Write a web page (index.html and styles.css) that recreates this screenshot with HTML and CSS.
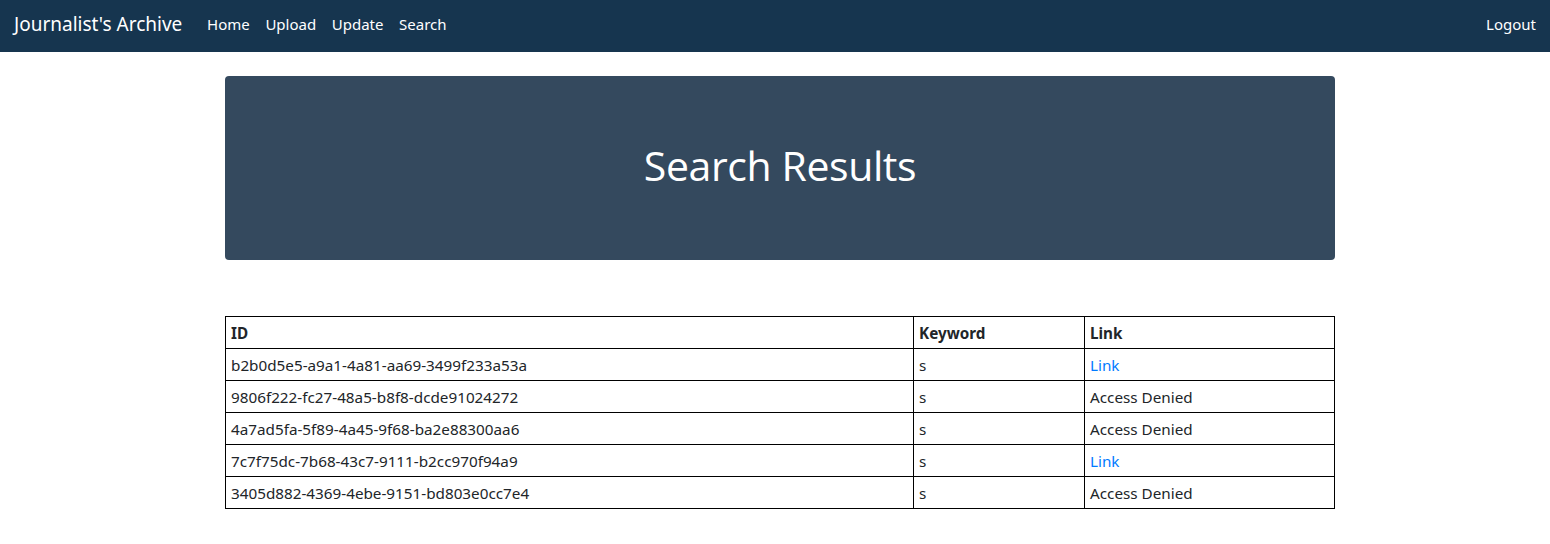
FILE: index.html
```html
<!DOCTYPE html>
<html lang="en">
<head>
<meta charset="utf-8">
<title>Search Results</title>
<link rel="stylesheet" href="styles.css">
</head>
<body>
<nav class="navbar">
  <a class="brand" href="#">Journalist's Archive</a>
  <ul class="nav-links">
    <li><a href="#">Home</a></li>
    <li><a href="#">Upload</a></li>
    <li><a href="#">Update</a></li>
    <li><a href="#">Search</a></li>
  </ul>
  <a class="logout" href="#">Logout</a>
</nav>
<main class="container">
  <section class="jumbotron">
    <h1>Search Results</h1>
  </section>
  <table class="results">
    <thead>
      <tr><th class="col-id">ID</th><th class="col-kw">Keyword</th><th class="col-link">Link</th></tr>
    </thead>
    <tbody>
      <tr><td>b2b0d5e5-a9a1-4a81-aa69-3499f233a53a</td><td>s</td><td><a href="#">Link</a></td></tr>
      <tr><td>9806f222-fc27-48a5-b8f8-dcde91024272</td><td>s</td><td>Access Denied</td></tr>
      <tr><td>4a7ad5fa-5f89-4a45-9f68-ba2e88300aa6</td><td>s</td><td>Access Denied</td></tr>
      <tr><td>7c7f75dc-7b68-43c7-9111-b2cc970f94a9</td><td>s</td><td><a href="#">Link</a></td></tr>
      <tr><td>3405d882-4369-4ebe-9151-bd803e0cc7e4</td><td>s</td><td>Access Denied</td></tr>
    </tbody>
  </table>
</main>
</body>
</html>
```
FILE: styles.css
```css
* { box-sizing: border-box; }
html, body {
  margin: 0;
  padding: 0;
  background: #fff;
  color: #212529;
  font-family: "Noto Sans", "Open Sans", sans-serif;
  font-size: 15.25px;
}
a { text-decoration: none; }

.navbar {
  height: 52px;
  background: #16354f;
  display: flex;
  align-items: center;
  padding: 0 14px 5px;
}
.brand {
  color: #fff;
  font-size: 19px;
  margin-right: 17px;
}
.nav-links {
  list-style: none;
  margin: 0;
  padding: 0;
  display: flex;
  flex: 1;
}
.nav-links a {
  display: block;
  color: #fff;
  font-size: 15px;
  padding: 0 7.8px;
}
.logout {
  color: #fff;
  font-size: 15px;
}

.container {
  width: 1110px;
  margin: 24px 0 0 calc(50% - 550px);
}
.jumbotron {
  background: #34495e;
  border-radius: 4px;
  height: 184px;
  display: flex;
  align-items: center;
  justify-content: center;
  padding-bottom: 6px;
  margin-bottom: 56px;
}
.jumbotron h1 {
  margin: 0;
  color: #fff;
  font-family: "Open Sans", sans-serif;
  font-weight: 400;
  font-size: 41px;
  line-height: 48px;
  letter-spacing: -0.4px;
}

.results {
  width: 100%;
  border-collapse: collapse;
  table-layout: fixed;
}
.results th, .results td {
  border: 1px solid #000;
  height: 32px;
  padding: 0 5px;
  text-align: left;
  vertical-align: middle;
  white-space: nowrap;
}
.results th { font-weight: 700; }
.col-id { width: 688px; }
.col-kw { width: 171px; }
.results td a { color: #007bff; }
```
